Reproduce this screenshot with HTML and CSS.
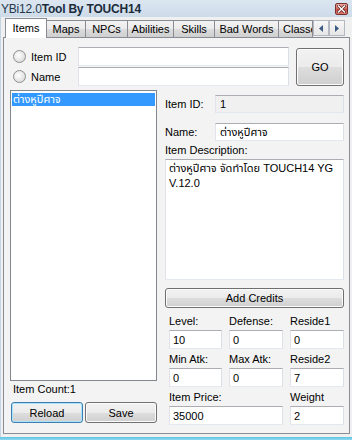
FILE: index.html
```html
<html>
<head>
    <meta charset="utf-8">
    <link rel="stylesheet" href="styles.css">
</head>
<body>
    <div class="window">
        <div class="titlebar">
            <span class="title">YBi12.0<b>Tool By TOUCH14</b></span>
            <span class="closeBtn">
                <svg width="9" height="8" viewBox="0 0 9 8">
                    <path d="M1.5 1 L7.5 7 M7.5 1 L1.5 7" stroke="#5a1f1f" stroke-width="2.6" stroke-linecap="square"/>
                    <path d="M1.5 1 L7.5 7 M7.5 1 L1.5 7" stroke="#ffffff" stroke-width="1.4" stroke-linecap="square"/>
                </svg>
            </span>
        </div>
        <div class="client">
            <div class="tabstrip">
                <div class="tab active" style="width: 42px;">Items</div>
                <div class="tab" style="width: 40px;">Maps</div>
                <div class="tab" style="width: 43px;">NPCs</div>
                <div class="tab" style="width: 47px;">Abilities</div>
                <div class="tab" style="width: 42px;">Skills</div>
                <div class="tab" style="width: 65px;">Bad Words</div>
                <div class="tab clipped" style="width: 35px;">Classes</div>
                <div class="tabScroll">
                    <span class="scrollBtn">
                        <svg width="4" height="7" viewBox="0 0 4 7"><path d="M4 0 L0 3.5 L4 7 Z" fill="#3d5a85"/></svg>
                    </span>
                    <span class="scrollBtn">
                        <svg width="4" height="7" viewBox="0 0 4 7"><path d="M0 0 L4 3.5 L0 7 Z" fill="#3d5a85"/></svg>
                    </span>
                </div>
            </div>
            <div class="tabpage">
                <div class="search">
                    <div class="searchRows">
                        <div class="searchRow">
                            <span class="radio"></span>
                            <span class="radioLabel">Item ID</span>
                            <div class="textbox"></div>
                        </div>
                        <div class="searchRow">
                            <span class="radio"></span>
                            <span class="radioLabel">Name</span>
                            <div class="textbox"></div>
                        </div>
                    </div>
                    <div class="button goBtn">GO</div>
                </div>
                <div class="main">
                    <div class="leftCol">
                        <div class="listbox">
                            <div class="listItem selected">ต่างหูปีศาจ</div>
                        </div>
                        <div class="count">Item Count:1</div>
                        <div class="buttonRow">
                            <div class="button focused">Reload</div>
                            <div class="button">Save</div>
                        </div>
                    </div>
                    <div class="rightCol">
                        <div class="fieldRow">
                            <span class="fieldLabel">Item ID:</span>
                            <div class="textbox readonly">1</div>
                        </div>
                        <div class="fieldRow nameRow">
                            <span class="fieldLabel">Name:</span>
                            <div class="textbox">ต่างหูปีศาจ</div>
                        </div>
                        <div class="descLabel">Item Description:</div>
                        <div class="textbox textarea">ต่างหูปีศาจ จัดทำโดย TOUCH14 YG<br>V.12.0</div>
                        <div class="button creditsBtn">Add Credits</div>
                        <div class="statGrid">
                            <div class="stat"><span>Level:</span><div class="textbox">10</div></div>
                            <div class="stat"><span>Defense:</span><div class="textbox">0</div></div>
                            <div class="stat"><span>Reside1</span><div class="textbox">0</div></div>
                            <div class="stat"><span>Min Atk:</span><div class="textbox">0</div></div>
                            <div class="stat"><span>Max Atk:</span><div class="textbox">0</div></div>
                            <div class="stat"><span>Reside2</span><div class="textbox">7</div></div>
                            <div class="stat wide"><span>Item Price:</span><div class="textbox">35000</div></div>
                            <div class="stat"><span>Weight</span><div class="textbox">2</div></div>
                        </div>
                    </div>
                </div>
            </div>
        </div>
        <div class="bottomEdge"></div>
    </div>
</body>
</html>
```

FILE: styles.css
```css
body {
    margin: 0;
    font-family: "Liberation Sans", "Noto Sans Thai", "Noto Sans", sans-serif;
    font-size: 11px;
    color: #000;
    background: #f0f0f0;
}

.window {
    width: 352px;
    height: 440px;
    overflow: hidden;
    background: #d4e0ec;
}

.titlebar {
    height: 17px;
    display: flex;
    align-items: center;
    justify-content: space-between;
    padding: 0 4px 0 1px;
    background: linear-gradient(#dbe6f1, #cddbe9);
}

.title {
    font-family: "Liberation Sans", sans-serif;
    font-size: 12px;
    color: #26384a;
    letter-spacing: -0.2px;
}

.title b {
    color: #1c2c3c;
}

.closeBtn {
    width: 13px;
    height: 12px;
    box-sizing: border-box;
    border: 1px solid #7a3030;
    border-radius: 2px;
    background: linear-gradient(#e8a8a0, #d4685c 50%, #c04a3e 51%, #d87a6c);
    display: flex;
    align-items: center;
    justify-content: center;
}

.client {
    background: #f0f0f0;
    height: 420px;
    padding: 0 2px;
    border-left: 1px solid #c4d4e4;
    box-sizing: border-box;
}

.tabstrip {
    height: 20px;
    display: flex;
    align-items: flex-end;
    padding-left: 3px;
    position: relative;
    z-index: 1;
}

.tab {
    height: 17px;
    box-sizing: border-box;
    border: 1px solid #898c95;
    border-bottom: none;
    margin-left: -1px;
    background: linear-gradient(#f2f2f2, #ebebeb 50%, #dddddd 51%, #cfcfcf);
    text-align: center;
    line-height: 16px;
    white-space: nowrap;
    overflow: hidden;
}

.tab.active {
    height: 20px;
    margin-bottom: -1px;
    background: #ffffff;
    line-height: 18px;
    position: relative;
    z-index: 1;
}

.tab.clipped {
    text-align: left;
    padding-left: 4px;
}

.tabScroll {
    display: flex;
    margin-bottom: 1px;
}

.scrollBtn {
    width: 16px;
    height: 16px;
    box-sizing: border-box;
    border: 1px solid #b4b8c0;
    background: linear-gradient(#f7f7f7, #e6e6e6);
    display: flex;
    align-items: center;
    justify-content: center;
}

.tabpage {
    height: 397px;
    box-sizing: border-box;
    border: 1px solid #898c95;
    background: #f3f3f3;
    padding: 9px 5px 0 6px;
}

.search {
    display: flex;
    gap: 7px;
}

.searchRows {
    width: 279px;
    display: flex;
    flex-direction: column;
    gap: 1px;
}

.searchRow {
    height: 19px;
    display: flex;
    align-items: center;
}

.radio {
    width: 13px;
    height: 13px;
    box-sizing: border-box;
    margin-left: 3px;
    border: 1px solid #8e8f8f;
    border-radius: 50%;
    background: radial-gradient(circle at 40% 40%, #ffffff, #e6e6e6 55%, #cfcfcf);
}

.radioLabel {
    width: 47px;
    margin-left: 5px;
}

.textbox {
    box-sizing: border-box;
    border: 1px solid;
    border-color: #abadb3 #dbdfe6 #e3e9ef #e2e3ea;
    background: #fff;
    padding: 0 3px;
    display: flex;
    align-items: center;
    white-space: nowrap;
}

.searchRow .textbox {
    flex: 1;
    height: 19px;
}

.button {
    box-sizing: border-box;
    border: 1px solid #707070;
    border-radius: 3px;
    background: linear-gradient(#f2f2f2, #ebebeb 50%, #dddddd 51%, #cfcfcf);
    box-shadow: inset 0 0 0 1px #fcfcfc;
    display: flex;
    align-items: center;
    justify-content: center;
}

.goBtn {
    width: 48px;
    height: 38px;
    margin-top: 1px;
}

.main {
    display: flex;
    gap: 8px;
    margin-top: 4px;
}

.leftCol {
    width: 148px;
}

.listbox {
    height: 291px;
    box-sizing: border-box;
    border: 1px solid #828790;
    background: #fff;
    padding: 2px 1px;
}

.listItem {
    height: 13px;
    line-height: 13px;
    padding-left: 1px;
}

.listItem.selected {
    background: #3399ff;
    color: #fff;
}

.count {
    margin-top: 2px;
    height: 13px;
    line-height: 13px;
    padding-left: 3px;
}

.buttonRow {
    display: flex;
    gap: 2px;
    margin-top: 6px;
    padding-left: 1px;
}

.buttonRow .button {
    width: 72px;
    height: 21px;
}

.button.focused {
    border-color: #3c7fb1;
    box-shadow: inset 0 0 0 1px #a9e2fa;
}

.rightCol {
    width: 179px;
    padding-top: 5px;
}

.fieldRow {
    display: flex;
    align-items: center;
}

.fieldLabel {
    width: 50px;
}

.fieldRow .textbox {
    flex: 1;
    height: 18px;
    padding-left: 4px;
}

.textbox.readonly {
    background: #f0f0f0;
}

.nameRow {
    margin-top: 10px;
}

.descLabel {
    margin-top: 2px;
    line-height: 14px;
}

.textarea {
    margin-top: 2px;
    height: 121px;
    display: block;
    padding: 1px 3px;
    line-height: 15px;
}

.creditsBtn {
    margin-top: 8px;
    height: 20px;
}

.statGrid {
    display: grid;
    grid-template-columns: 53px 54px 54px;
    column-gap: 7px;
    row-gap: 3px;
    margin-top: 6px;
    padding-left: 4px;
}

.stat {
    display: flex;
    flex-direction: column;
    gap: 2px;
}

.stat span {
    line-height: 14px;
}

.stat .textbox {
    height: 19px;
}

.stat.wide {
    grid-column: 1 / 3;
}

.bottomEdge {
    height: 3px;
    background: linear-gradient(#5fc4e6, #8fd8f0);
}
```
